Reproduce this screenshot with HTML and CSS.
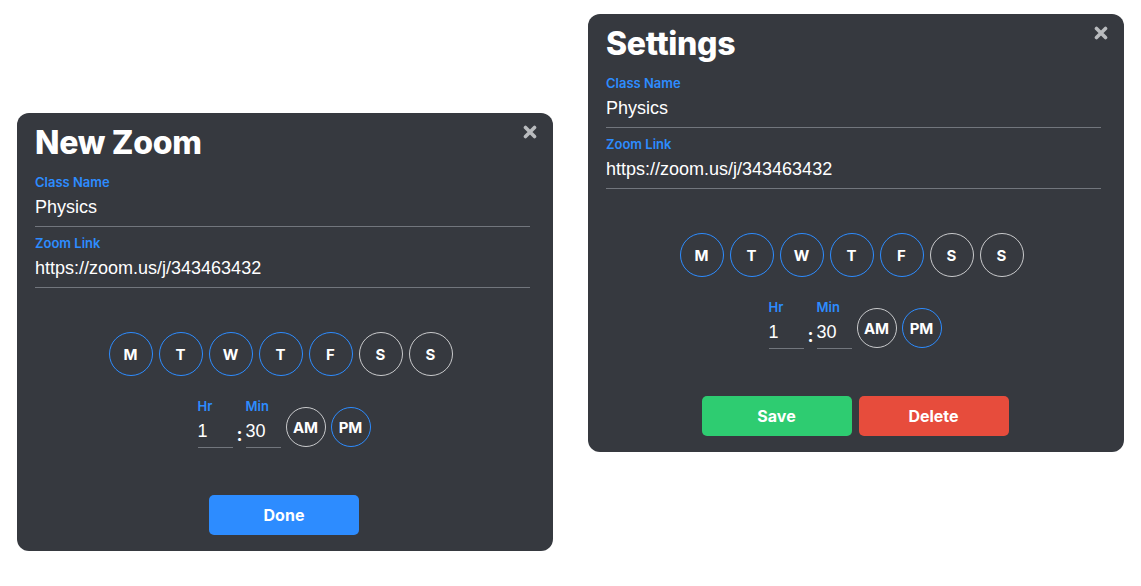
FILE: index.html
```html
<!DOCTYPE html>
<html lang="en">
<head>
<meta charset="utf-8">
<title>Zoom schedule</title>
<link rel="stylesheet" href="styles.css">
</head>
<body>
<div class="desk">
  <section class="panel panel-new">
    <button class="close" aria-label="Close">
      <svg width="14" height="14" viewBox="0 0 14 14"><path d="M2.5 2.5 L11.5 11.5 M11.5 2.5 L2.5 11.5" /></svg>
    </button>
    <h1 class="title">New Zoom</h1>
    <div class="field">
      <div class="label">Class Name</div>
      <div class="value">Physics</div>
    </div>
    <div class="field field-second">
      <div class="label">Zoom Link</div>
      <div class="value">https://zoom.us/j/343463432</div>
    </div>
    <div class="days">
      <span class="circle on">M</span>
      <span class="circle on">T</span>
      <span class="circle on">W</span>
      <span class="circle on">T</span>
      <span class="circle on">F</span>
      <span class="circle">S</span>
      <span class="circle">S</span>
    </div>
    <div class="time">
      <div class="tgroup">
        <div class="label">Hr</div>
        <div class="tinput">1</div>
      </div>
      <span class="colon">:</span>
      <div class="tgroup">
        <div class="label">Min</div>
        <div class="tinput">30</div>
      </div>
      <span class="circle ampm">AM</span>
      <span class="circle ampm on">PM</span>
    </div>
    <div class="actions">
      <button class="btn btn-blue">Done</button>
    </div>
  </section>

  <section class="panel panel-settings">
    <button class="close" aria-label="Close">
      <svg width="14" height="14" viewBox="0 0 14 14"><path d="M2.5 2.5 L11.5 11.5 M11.5 2.5 L2.5 11.5" /></svg>
    </button>
    <h1 class="title">Settings</h1>
    <div class="field">
      <div class="label">Class Name</div>
      <div class="value">Physics</div>
    </div>
    <div class="field field-second">
      <div class="label">Zoom Link</div>
      <div class="value">https://zoom.us/j/343463432</div>
    </div>
    <div class="days">
      <span class="circle on">M</span>
      <span class="circle on">T</span>
      <span class="circle on">W</span>
      <span class="circle on">T</span>
      <span class="circle on">F</span>
      <span class="circle">S</span>
      <span class="circle">S</span>
    </div>
    <div class="time">
      <div class="tgroup">
        <div class="label">Hr</div>
        <div class="tinput">1</div>
      </div>
      <span class="colon">:</span>
      <div class="tgroup">
        <div class="label">Min</div>
        <div class="tinput">30</div>
      </div>
      <span class="circle ampm">AM</span>
      <span class="circle ampm on">PM</span>
    </div>
    <div class="actions">
      <button class="btn btn-green">Save</button>
      <button class="btn btn-red">Delete</button>
    </div>
  </section>
</div>
</body>
</html>
```

FILE: styles.css
```css
* { box-sizing: border-box; }

html, body {
  margin: 0;
  padding: 0;
  background: #ffffff;
}

body {
  font-family: "Inter", "Liberation Sans", sans-serif;
  color: #ffffff;
}

.desk {
  display: flex;
  align-items: flex-start;
  gap: 35px;
  padding: 14px 0 0 17px;
}

.panel {
  position: relative;
  width: 536px;
  background: #36393f;
  border-radius: 12px;
  padding: 10px 23px 16px 18px;
}

.panel-new {
  margin-top: 99px;
}

.close {
  position: absolute;
  top: 12px;
  right: 16px;
  width: 14px;
  height: 14px;
  padding: 0;
  border: 0;
  background: none;
  display: block;
}

.close svg {
  display: block;
}

.close path {
  stroke: #b9bbbe;
  stroke-width: 3.6;
  stroke-linecap: round;
  fill: none;
}

.title {
  margin: 0;
  font-size: 32px;
  line-height: 40px;
  font-weight: 800;
  letter-spacing: -0.3px;
  color: #ffffff;
}

.field {
  margin-top: 11px;
}

.field-second {
  margin-top: 8px;
}

.label {
  font-size: 13px;
  line-height: 16px;
  font-weight: 600;
  color: #2d8cff;
}

.value {
  margin-top: 5px;
  font-family: "Liberation Sans", Arial, sans-serif;
  font-size: 18px;
  line-height: 24px;
  padding-bottom: 7px;
  border-bottom: 1px solid #72767d;
  color: #ffffff;
}

.days {
  margin-top: 44px;
  display: flex;
  justify-content: center;
  gap: 6px;
  padding-right: 4px;
}

.circle {
  width: 44px;
  height: 44px;
  border-radius: 50%;
  border: 1px solid #c9cacc;
  display: flex;
  align-items: center;
  justify-content: center;
  font-size: 15px;
  font-weight: 700;
  color: #ffffff;
}

.circle.on {
  border-color: #2d8cff;
}

.time {
  margin-top: 22px;
  display: flex;
  justify-content: center;
  align-items: flex-end;
  padding-left: 3px;
}

.tgroup {
  width: 35px;
  display: flex;
  flex-direction: column;
}

.tgroup .label {
  margin-bottom: 5px;
}

.tinput {
  font-family: "Liberation Sans", Arial, sans-serif;
  font-size: 18px;
  line-height: 24px;
  padding-bottom: 4px;
  border-bottom: 1px solid #72767d;
  color: #ffffff;
}

.colon {
  width: 13px;
  text-align: center;
  font-size: 18px;
  font-weight: 700;
  line-height: 24px;
  padding-bottom: 1px;
  padding-left: 1px;
}

.circle.ampm {
  width: 40px;
  height: 40px;
  font-size: 15px;
  margin-left: 5px;
  margin-bottom: 1px;
}

.actions {
  margin-top: 47px;
  display: flex;
  justify-content: center;
  gap: 7px;
  padding-left: 3px;
}

.btn {
  width: 150px;
  height: 40px;
  border: 0;
  border-radius: 5px;
  font-family: "Inter", "Liberation Sans", sans-serif;
  font-size: 16px;
  font-weight: 700;
  color: #ffffff;
  padding: 0;
}

.btn-blue { background: #2d8cff; }
.btn-green { background: #2ecc71; }
.btn-red { background: #e74c3c; }
```
